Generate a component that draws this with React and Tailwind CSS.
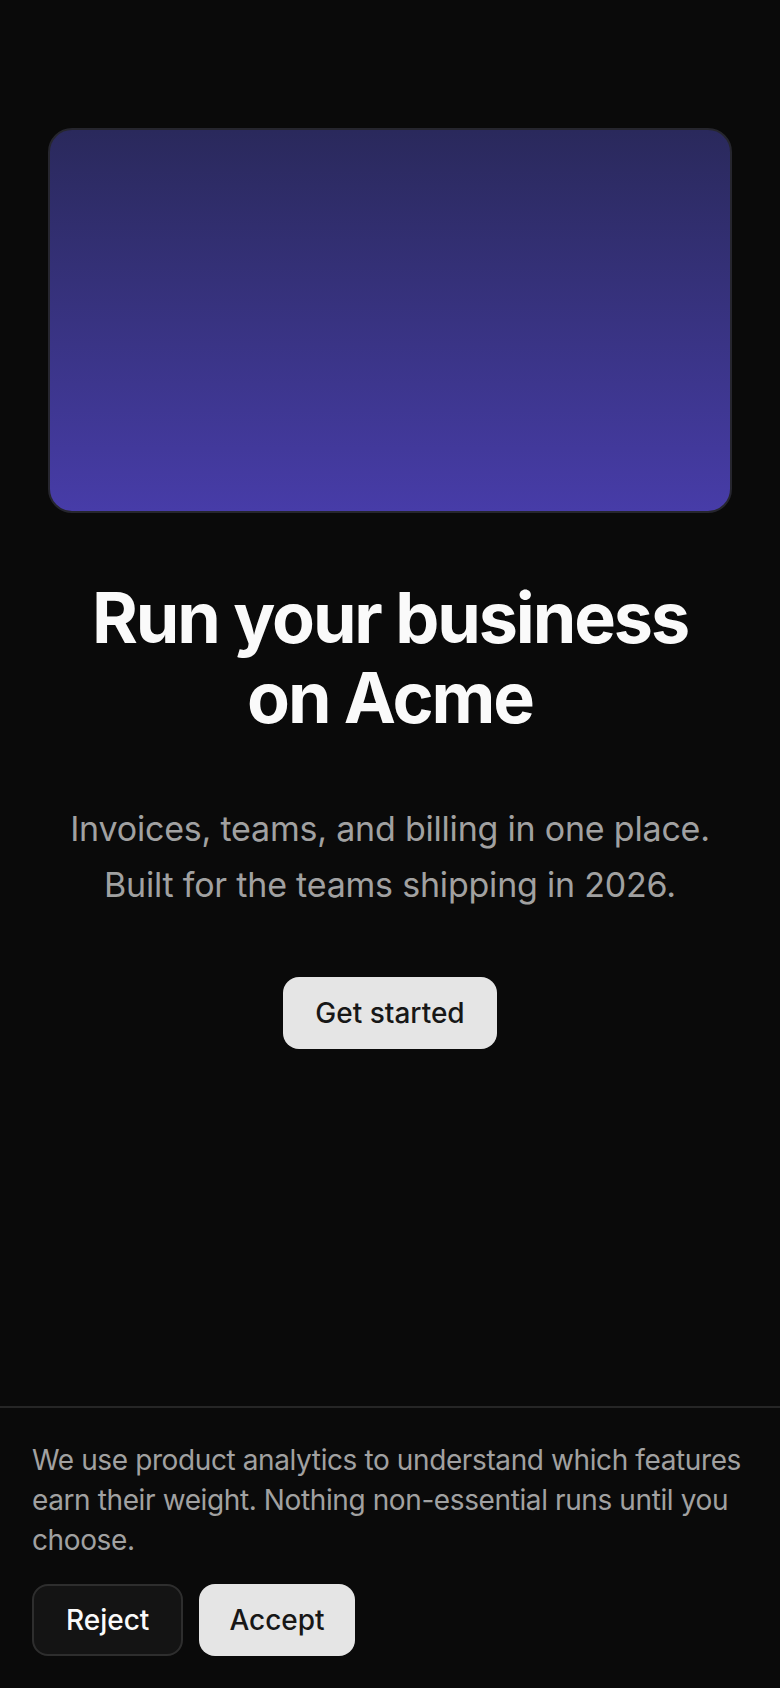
export default function App() {
  return (
    <div className="min-h-screen bg-[#0a0a0a] flex flex-col font-['Inter','Noto_Sans',sans-serif]">
      <main className="px-12 pt-32 flex flex-col items-center text-center">
        <div className="w-full aspect-video rounded-3xl border-2 border-[#26262e] bg-gradient-to-b from-[#2a295c] to-[#473ca8]" />
        <h1 className="mt-[65px] text-[70px] leading-[80px] font-bold tracking-[-0.03em] text-[#fafafa]">
          Run your business
          <br />
          on Acme
        </h1>
        <p className="mt-[63px] text-[34px] leading-[56px] tracking-[-0.006em] text-[#a1a1a1]">
          Invoices, teams, and billing in one place.
          <br />
          Built for the teams shipping in 2026.
        </p>
        <button className="mt-16 h-[72px] px-8 rounded-2xl bg-[#e5e5e5] text-[#171717] text-[28px] font-medium">
          Get started
        </button>
      </main>

      <div className="mt-auto border-t-2 border-[#262626] px-8 pt-8 pb-8">
        <p className="text-[28px] leading-[40px] tracking-[-0.014em] text-[#a1a1a1]">
          We use product analytics to understand which features earn their weight. Nothing non-essential runs until you choose.
        </p>
        <div className="mt-6 flex gap-4">
          <button className="h-[72px] px-8 rounded-2xl border-2 border-[#2e2e2e] bg-[#141414] text-[#fafafa] text-[28px] font-medium">
            Reject
          </button>
          <button className="h-[72px] px-[30px] rounded-2xl bg-[#e5e5e5] text-[#171717] text-[28px] font-medium">
            Accept
          </button>
        </div>
      </div>
    </div>
  )
}
